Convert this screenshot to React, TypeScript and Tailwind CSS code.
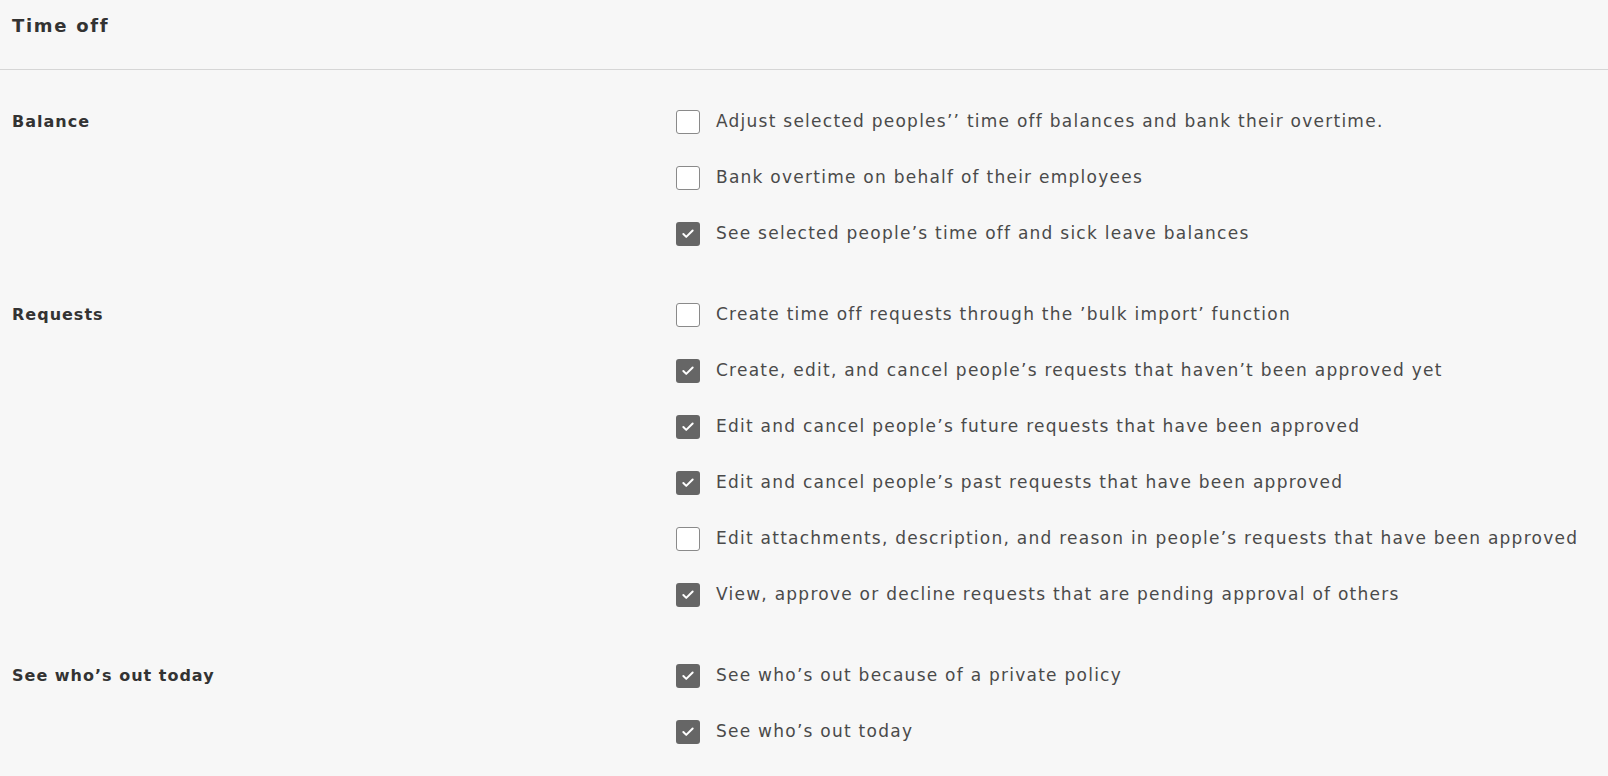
import { Check } from 'lucide-react';

type Permission = { label: string; checked: boolean };

const sections: { title: string; items: Permission[] }[] = [
  {
    title: 'Balance',
    items: [
      { label: 'Adjust selected peoples\u2019\u2019 time off balances and bank their overtime.', checked: false },
      { label: 'Bank overtime on behalf of their employees', checked: false },
      { label: 'See selected people\u2019s time off and sick leave balances', checked: true },
    ],
  },
  {
    title: 'Requests',
    items: [
      { label: 'Create time off requests through the \u2019bulk import\u2019 function', checked: false },
      { label: 'Create, edit, and cancel people\u2019s requests that haven\u2019t been approved yet', checked: true },
      { label: 'Edit and cancel people\u2019s future requests that have been approved', checked: true },
      { label: 'Edit and cancel people\u2019s past requests that have been approved', checked: true },
      { label: 'Edit attachments, description, and reason in people\u2019s requests that have been approved', checked: false },
      { label: 'View, approve or decline requests that are pending approval of others', checked: true },
    ],
  },
  {
    title: 'See who\u2019s out today',
    items: [
      { label: 'See who\u2019s out because of a private policy', checked: true },
      { label: 'See who\u2019s out today', checked: true },
    ],
  },
];

function Box({ checked }: { checked: boolean }) {
  if (checked) {
    return (
      <span className="flex h-6 w-6 shrink-0 items-center justify-center rounded-[3px] bg-[#666666]">
        <Check size={14} strokeWidth={3.4} color="#ffffff" />
      </span>
    );
  }
  return <span className="h-6 w-6 shrink-0 rounded-[3px] border-[1.5px] border-[#8a8a8a] bg-white" />;
}

export default function App() {
  return (
    <div className="min-h-[776px] bg-[#f7f7f7] font-['DejaVu_Sans',sans-serif] text-[#4a4a4a]">
      <div className="h-[70px] border-b border-[#d6d6d6] px-3 pt-[14px]">
        <h1 className="text-[18px] font-bold leading-6 tracking-[1.7px] text-[#333333]">Time off</h1>
      </div>
      <div className="flex flex-col gap-[25px] pt-6">
        {sections.map((section) => (
          <div key={section.title} className="grid grid-cols-[676px_1fr]">
            <div className="flex h-14 items-center pl-3 text-[16px] font-bold tracking-[1px] text-[#333333]">
              {section.title}
            </div>
            <div className="flex flex-col">
              {section.items.map((item) => (
                <label key={item.label} className="flex h-14 items-center gap-4 text-[17px] tracking-[1.25px]">
                  <Box checked={item.checked} />
                  <span>{item.label}</span>
                </label>
              ))}
            </div>
          </div>
        ))}
      </div>
    </div>
  );
}
